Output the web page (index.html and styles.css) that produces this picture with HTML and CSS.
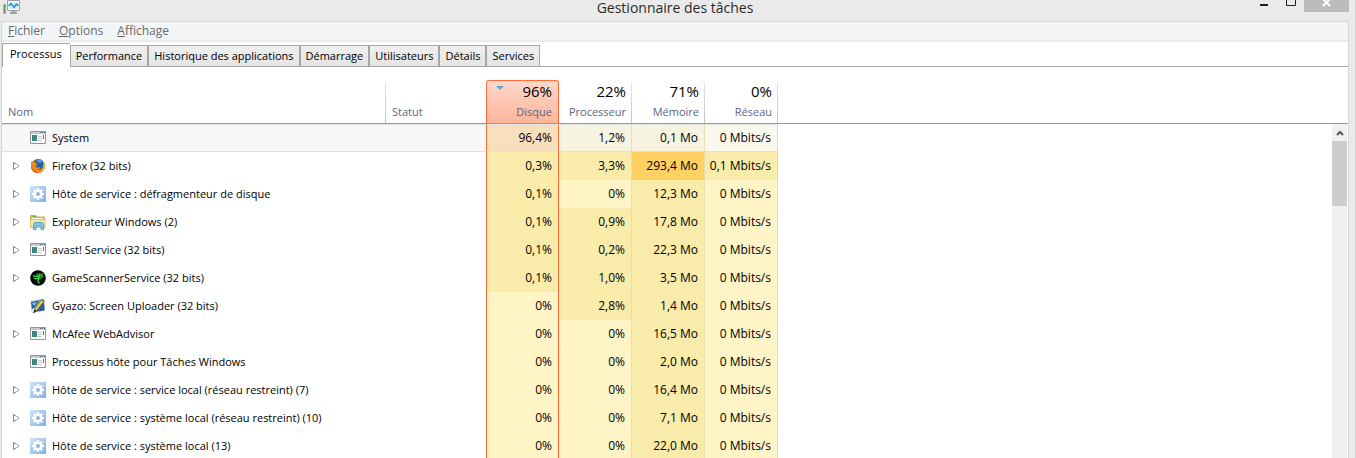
FILE: index.html
```
<!DOCTYPE html>
<html lang="fr">
<head>
<meta charset="UTF-8">
<meta name="viewport" content="width=device-width, initial-scale=1.0">
<title>Gestionnaire des tâches</title>
<link rel="stylesheet" href="styles.css">
</head>
<body>
<!-- Shared icons -->
<svg class="defs" aria-hidden="true">
    <linearGradient id="gear-bg" x1="0" y1="0" x2="1" y2="1">
        <stop offset="0" stop-color="#cfe2f8"/>
        <stop offset="1" stop-color="#84b0e6"/>
    </linearGradient>
    <linearGradient id="app-bg" x1="0" y1="0" x2="1" y2="1">
        <stop offset="0" stop-color="#3a76b4"/>
        <stop offset="1" stop-color="#3f9a58"/>
    </linearGradient>
    <symbol id="app" viewBox="0 0 16 16">
        <path fill="#fff" stroke="#8f979d" d="M.5 1.500h15v12H.5z"/>
        <path fill="#c3cbd1" d="M1 2h14v2H1z"/>
        <path fill="#5d6c79" d="M10 2h1v1h-1zM12 2h1v1h-1zM14 2h1v1h-1z"/>
        <path fill="url(#app-bg)" d="M2 5h5v6H2z"/>
        <path fill="#c4cace" d="M8 6h4v1H8zM8 8h4v1H8zM8 10h4v1H8z"/>
        <path fill="#5e7485" d="M13 5h1v4h-1z"/>
    </symbol>
    <symbol id="gear" viewBox="0 0 16 16">
        <path fill="url(#gear-bg)" d="M0 0h16v16H0z"/>
        <path stroke="#fff" stroke-width="2.200" d="M8 2v12M2 8h12M3.800 3.800l8.400 8.400M12.200 3.800l-8.400 8.400"/>
        <circle cx="8" cy="8" r="4.600" fill="#fff"/>
        <circle cx="8" cy="8" r="2" fill="#8fb5e3"/>
    </symbol>
    <symbol id="firefox" viewBox="0 0 16 16">
        <circle cx="8" cy="8" r="7" fill="#e8701a"/>
        <circle cx="8.500" cy="6.300" r="5.300" fill="#2560a8"/>
        <path fill="#4d9bd8" d="M6 2c2-1 5-.5 6.500 1.500L10 5 7 4z"/>
        <path fill="#f08a1c" d="M1.500 3c1 .3 1.500.7 2 1.200 1-.4 2-.2 2.500.1-.6 1-.4 1.600 1.500 1.800-.2 1.200-2 1.300-1.700 2.400C7 10.500 10 9 10.500 9.500 9 12.500 5 12 4 9.500c1 4 8 4 9.200-1 .5-2 .2-3-.6-4.500 2 1.300 2.800 4 1.900 6.500C13 14 9.500 15.500 6 14.700 1 13.200 0 7.500 1.500 3z"/>
        <path fill="#fbc842" d="M14 5.500c1.500 3.500 0 7-3 8.500 2-2 2.700-5 3-8.500z"/>
        <path fill="#c8371b" d="M1 8c0 4 3 7.300 8 7-3-.8-7-2.500-8-7z"/>
    </symbol>
    <symbol id="explorer" viewBox="0 0 16 16">
        <path fill="#e0bd59" stroke="#cfae52" d="M.5 13.500v-12H6l1.500 1.500h7v10.500z"/>
        <path fill="#5da74c" d="M3 2h3v1H3z"/>
        <path fill="#fff" d="M2 4h11v2H2z"/>
        <path fill="#fae9a0" stroke="#dcc068" d="M.5 5.500h14.500v8H.5z"/>
        <path fill="#7cc8f0" stroke="#3b90c8" stroke-width=".8" d="M3.500 15.500V11c0-2 1-2.500 2.500-2.500h5c1.500 0 2.500.5 2.500 2.500v4.500H11V12H6v3.500z"/>
    </symbol>
    <symbol id="razer" viewBox="0 0 16 16">
        <circle cx="8" cy="8" r="7.800" fill="#050805"/>
        <path fill="none" stroke="#2fd52f" stroke-width="1.300" stroke-linecap="round" d="M3.500 5.500c1.500 1.500 3 .5 4.500 1.500s.5 2.500 0 3.500 .3 2 1.300 2.500M12.500 4C12 5.500 10.500 6 8.500 7M12.800 6.500c-1 1.500-2.300 1.800-3.800 2M4 8c1.300 1 2.500.7 4 .8M7 4c.3 1 .8 1.500 1.500 2.500M10 3.500L9 6"/>
    </symbol>
    <symbol id="gyazo" viewBox="0 0 16 16">
        <path fill="#f3f6f8" stroke="#b8c2c9" stroke-width=".8" d="M1 3l13-1.500.5 11L2 14.500z"/>
        <path fill="#245f9e" d="M1 4l9-2-5.500 8L2 11zM14 4l.5 8.500-8 1z"/>
        <path fill="#8cc4ea" d="M2 5l5-1-3 4z"/>
        <path fill="#22323e" d="M11.500 1L14.500 3 7 13l-3.500 2.500.5-4z"/>
        <path fill="#f4da3e" d="M11.600 2L13.500 3.300 6.500 12.500 4.700 11.500z"/>
    </symbol>
</svg>

<div class="window">
    <header class="titlebar">
        <svg class="logo" viewBox="0 0 17 14" aria-hidden="true">
            <path fill="#b4b8bb" d="M0 4h3v10H0z"/>
            <path fill="#777" d="M1 7h1v6H1z"/>
            <path fill="#23c832" d="M1 5h2v2H1z"/>
            <path fill="#fff" stroke="#9ba1a6" d="M4.500.5h12v10h-12z"/>
            <path fill="#d4effb" d="M6 2h9v7H6z"/>
            <path fill="none" stroke="#1689c4" stroke-width="1.300" d="M5.500 6L8 3.500l3 4L13.500 4l2 2"/>
            <path fill="#9ba1a6" d="M9 10h3v2h2v2H7v-2h2z"/>
        </svg>
        <h1>Gestionnaire des tâches</h1>
        <div class="controls">
            <button class="minimize" aria-label="Réduire"><svg viewBox="0 0 10 10"><path fill="#222" d="M1 8h8v2H1z"/></svg></button>
            <button class="maximize" aria-label="Agrandir"><svg viewBox="0 0 10 10"><path fill="none" stroke="#222" d="M.5-.5h9v10h-9z"/></svg></button>
            <button class="close" aria-label="Fermer"><svg viewBox="0 0 10 10"><path fill="none" stroke="#fff" stroke-width="2" d="M1 1l7 7M8 1L1 8"/></svg></button>
        </div>
    </header>

    <main class="content">
        <nav class="menu">
            <button><u>F</u>ichier</button>
            <button><u>O</u>ptions</button>
            <button><u>A</u>ffichage</button>
        </nav>

        <div class="tabs" role="tablist">
            <button class="tab active" role="tab" aria-selected="true">Processus</button>
            <button class="tab" role="tab">Performance</button>
            <button class="tab" role="tab">Historique des applications</button>
            <button class="tab" role="tab">Démarrage</button>
            <button class="tab" role="tab">Utilisateurs</button>
            <button class="tab" role="tab">Détails</button>
            <button class="tab" role="tab">Services</button>
        </div>

        <div class="panel">
            <table class="processes">
                <colgroup>
                    <col class="col-name">
                    <col class="col-status">
                    <col class="col-value">
                    <col class="col-value">
                    <col class="col-value">
                    <col class="col-value">
                    <col>
                </colgroup>
                <thead>
                    <tr>
                        <th class="name">Nom</th>
                        <th class="status">Statut</th>
                        <th class="value disk"><svg class="sort" viewBox="0 0 8 4" aria-hidden="true"><path fill="#5aa5cf" d="M0 0h8L4 4z"/></svg><strong>96%</strong>Disque</th>
                        <th class="value"><strong>22%</strong>Processeur</th>
                        <th class="value"><strong>71%</strong>Mémoire</th>
                        <th class="value"><strong>0%</strong>Réseau</th>
                        <th></th>
                    </tr>
                </thead>
                <tbody>
                    <tr class="selected">
                        <td class="name"><div><svg class="icon"><use href="#app"/></svg>System</div></td><td></td>
                        <td class="value disk mid">96,4%</td><td class="value mid">1,2%</td><td class="value mid">0,1 Mo</td><td class="value">0 Mbits/s</td><td></td>
                    </tr>
                    <tr>
                        <td class="name"><div><button class="expand" aria-label="Développer"></button><svg class="icon"><use href="#firefox"/></svg>Firefox (32 bits)</div></td><td></td>
                        <td class="value disk mid">0,3%</td><td class="value mid">3,3%</td><td class="value high">293,4 Mo</td><td class="value mid">0,1 Mbits/s</td><td></td>
                    </tr>
                    <tr>
                        <td class="name"><div><button class="expand" aria-label="Développer"></button><svg class="icon"><use href="#gear"/></svg>Hôte de service : défragmenteur de disque</div></td><td></td>
                        <td class="value disk mid">0,1%</td><td class="value">0%</td><td class="value mid">12,3 Mo</td><td class="value">0 Mbits/s</td><td></td>
                    </tr>
                    <tr>
                        <td class="name"><div><button class="expand" aria-label="Développer"></button><svg class="icon"><use href="#explorer"/></svg>Explorateur Windows (2)</div></td><td></td>
                        <td class="value disk mid">0,1%</td><td class="value mid">0,9%</td><td class="value mid">17,8 Mo</td><td class="value">0 Mbits/s</td><td></td>
                    </tr>
                    <tr>
                        <td class="name"><div><button class="expand" aria-label="Développer"></button><svg class="icon"><use href="#app"/></svg>avast! Service (32 bits)</div></td><td></td>
                        <td class="value disk mid">0,1%</td><td class="value mid">0,2%</td><td class="value mid">22,3 Mo</td><td class="value">0 Mbits/s</td><td></td>
                    </tr>
                    <tr>
                        <td class="name"><div><button class="expand" aria-label="Développer"></button><svg class="icon"><use href="#razer"/></svg>GameScannerService (32 bits)</div></td><td></td>
                        <td class="value disk mid">0,1%</td><td class="value mid">1,0%</td><td class="value mid">3,5 Mo</td><td class="value">0 Mbits/s</td><td></td>
                    </tr>
                    <tr>
                        <td class="name"><div><svg class="icon"><use href="#gyazo"/></svg>Gyazo: Screen Uploader (32 bits)</div></td><td></td>
                        <td class="value disk">0%</td><td class="value mid">2,8%</td><td class="value mid">1,4 Mo</td><td class="value">0 Mbits/s</td><td></td>
                    </tr>
                    <tr>
                        <td class="name"><div><button class="expand" aria-label="Développer"></button><svg class="icon"><use href="#app"/></svg>McAfee WebAdvisor</div></td><td></td>
                        <td class="value disk">0%</td><td class="value">0%</td><td class="value mid">16,5 Mo</td><td class="value">0 Mbits/s</td><td></td>
                    </tr>
                    <tr>
                        <td class="name"><div><svg class="icon"><use href="#app"/></svg>Processus hôte pour Tâches Windows</div></td><td></td>
                        <td class="value disk">0%</td><td class="value">0%</td><td class="value mid">2,0 Mo</td><td class="value">0 Mbits/s</td><td></td>
                    </tr>
                    <tr>
                        <td class="name"><div><button class="expand" aria-label="Développer"></button><svg class="icon"><use href="#gear"/></svg>Hôte de service : service local (réseau restreint) (7)</div></td><td></td>
                        <td class="value disk">0%</td><td class="value">0%</td><td class="value mid">16,4 Mo</td><td class="value">0 Mbits/s</td><td></td>
                    </tr>
                    <tr>
                        <td class="name"><div><button class="expand" aria-label="Développer"></button><svg class="icon"><use href="#gear"/></svg>Hôte de service : système local (réseau restreint) (10)</div></td><td></td>
                        <td class="value disk">0%</td><td class="value">0%</td><td class="value mid">7,1 Mo</td><td class="value">0 Mbits/s</td><td></td>
                    </tr>
                    <tr>
                        <td class="name"><div><button class="expand" aria-label="Développer"></button><svg class="icon"><use href="#gear"/></svg>Hôte de service : système local (13)</div></td><td></td>
                        <td class="value disk">0%</td><td class="value">0%</td><td class="value mid">22,0 Mo</td><td class="value">0 Mbits/s</td><td></td>
                    </tr>
                </tbody>
            </table>
            <div class="side">
                <div class="side-head"></div>
                <div class="scrollbar">
                    <button class="scroll-up" aria-label="Monter"><svg viewBox="0 0 8 6"><path fill="none" stroke="#555" stroke-width="2" d="M1 5l3-3 3 3"/></svg></button>
                    <div class="thumb"></div>
                </div>
            </div>
        </div>
    </main>
</div>
</body>
</html>
```
FILE: styles.css
```
* {
    box-sizing: border-box;
}

body {
    margin: 0;
    height: 100vh;
    overflow: hidden;
    font-family: "Open Sans", "Segoe UI", sans-serif;
    font-size: 11px;
    line-height: 16px;
    color: #000;
    background: #eaeaea;
}

button {
    margin: 0;
    padding: 0;
    border: 0;
    background: none;
    font: inherit;
    color: inherit;
}

svg {
    display: block;
}

.defs {
    position: absolute;
    width: 0;
    height: 0;
}

.window {
    display: flex;
    flex-direction: column;
    height: 100vh;
    padding: 0 6px 0 1px;
    border-right: 1px solid #d0d0d0;
}

/* Title bar */
.titlebar {
    display: grid;
    grid-template-columns: 1fr auto 1fr;
    height: 21px;
}

.logo {
    width: 17px;
    height: 14px;
    margin-left: 2px;
}

.titlebar h1 {
    margin: 0;
    font-size: 14px;
    font-weight: 400;
    line-height: 16px;
    color: #2b2b2b;
}

.controls {
    display: flex;
    justify-content: flex-end;
    align-items: flex-start;
}

.controls button {
    display: flex;
    justify-content: center;
    width: 27px;
    height: 12px;
}

.controls svg {
    width: 10px;
    height: 10px;
    margin-top: -4px;
}

.controls .close {
    width: 45px;
    background: #bcbcbc;
}

.controls .close svg {
    margin-top: -2px;
}

/* Window content */
.content {
    display: flex;
    flex-direction: column;
    flex: 1;
    min-height: 0;
    border: 1px solid #d5d7d9;
    border-bottom: 0;
    background: #fff;
}

.menu {
    display: flex;
    gap: 14px;
    height: 20px;
    padding-left: 6px;
    border-bottom: 2px solid #ebebec;
    background: #f4f5f7;
    font-size: 12px;
    color: #6a6a6a;
}

.tabs {
    display: flex;
    align-items: flex-end;
    height: 25px;
    border-bottom: 1px solid #a5a5a5;
}

.tab {
    height: 21px;
    padding: 0 5px;
    border: 1px solid #a5a5a5;
    border-bottom: 0;
    background: linear-gradient(#f0f0f0, #e4e4e4);
    white-space: nowrap;
}

.tab.active {
    height: 24px;
    margin-bottom: -1px;
    padding: 0 8px 3px 7px;
    border-right: 0;
    background: #fff;
}

/* Process list */
.panel {
    display: flex;
    flex: 1;
    min-height: 0;
    padding-top: 13px;
}

.processes {
    flex: 1;
    align-self: flex-start;
    table-layout: fixed;
    width: 100%;
    border-collapse: separate;
    border-spacing: 0;
}

.col-name {
    width: 384px;
}

.col-status {
    width: 100px;
}

.col-value {
    width: 73px;
}

th,
td {
    padding: 0;
    font-weight: 400;
    text-align: left;
    white-space: nowrap;
}

th {
    height: 44px;
    padding: 0 6px 3px;
    border-bottom: 1px solid #9b9b9b;
    vertical-align: bottom;
    color: #5a6585;
    background: linear-gradient(#e6e6e6, #c0c0c0) right 2px / 1px 100% no-repeat;
}

th.status,
th:last-child {
    background: none;
}

th.value {
    text-align: right;
}

th strong {
    display: block;
    margin-bottom: 3px;
    font-size: 15px;
    font-weight: 400;
    line-height: 20px;
    color: #000;
}

th.disk {
    position: relative;
    border: 1px solid #ff6b32;
    border-bottom-color: #9b9b9b;
    border-radius: 3px 3px 0 0;
    background: linear-gradient(#fdd8cc, #fdb59b);
}

.sort {
    position: absolute;
    top: 5px;
    left: 9px;
    width: 8px;
    height: 4px;
}

td {
    height: 28px;
}

td.name div {
    display: flex;
    align-items: center;
    padding-left: 28px;
}

.icon {
    flex: none;
    width: 16px;
    height: 16px;
    margin-right: 6px;
}

.expand {
    width: 7px;
    height: 9px;
    margin: 0 10px 0 -17px;
    background: #909090;
    clip-path: polygon(evenodd, 0 0, 6px 4px, 6px 5px, 0 9px, 0 0, 1px 2px, 1px 7px, 5px 5px, 5px 4px, 1px 2px);
}

td.value {
    padding-right: 6px;
    border-right: 1px solid #e9dcae;
    font-size: 12px;
    text-align: right;
    background: #fff4c6;
}

td.mid {
    background: #f9ebaa;
}

td.high {
    background: #ffd163;
}

td.disk {
    border-right-color: #ff6b32;
    border-left: 1px solid #ff6b32;
}

.selected td:nth-child(-n+6) {
    border-top: 1px solid #e2e2e2;
    border-bottom: 1px solid #dedede;
    background: #f7f7f7;
}

.selected td.value {
    background: #faf8ec;
}

.selected td.mid {
    background: #f7f3e1;
}

.selected td.disk {
    background: #f8e0bf;
}

/* Scrollbar */
.side {
    display: flex;
    flex-direction: column;
    width: 16px;
}

.side-head {
    height: 44px;
    border-bottom: 1px solid #9b9b9b;
}

.scrollbar {
    flex: 1;
    margin-right: 1px;
    background: #f0f0f0;
}

.scroll-up {
    display: flex;
    align-items: center;
    justify-content: center;
    width: 100%;
    height: 17px;
}

.scroll-up svg {
    width: 8px;
    height: 6px;
}

.thumb {
    height: 65px;
    background: #cdcdcd;
}
```
